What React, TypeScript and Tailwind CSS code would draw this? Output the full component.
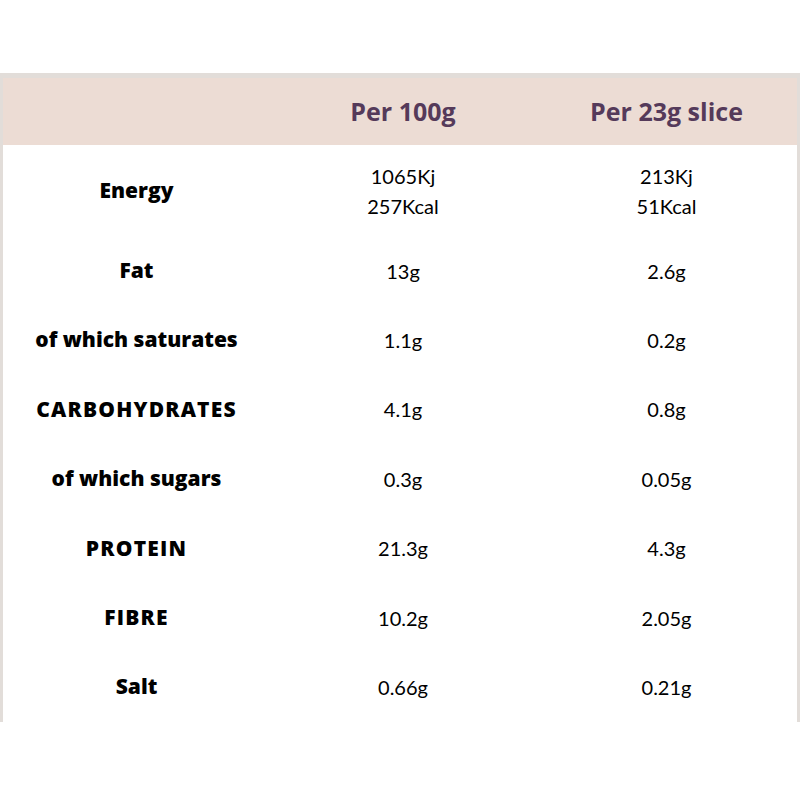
const rows: { label: string; caps?: boolean; per100: string[]; perSlice: string[] }[] = [
  { label: "Energy", per100: ["1065Kj", "257Kcal"], perSlice: ["213Kj", "51Kcal"] },
  { label: "Fat", per100: ["13g"], perSlice: ["2.6g"] },
  { label: "of which saturates", per100: ["1.1g"], perSlice: ["0.2g"] },
  { label: "CARBOHYDRATES", caps: true, per100: ["4.1g"], perSlice: ["0.8g"] },
  { label: "of which sugars", per100: ["0.3g"], perSlice: ["0.05g"] },
  { label: "PROTEIN", caps: true, per100: ["21.3g"], perSlice: ["4.3g"] },
  { label: "FIBRE", caps: true, per100: ["10.2g"], perSlice: ["2.05g"] },
  { label: "Salt", per100: ["0.66g"], perSlice: ["0.21g"] },
];

export default function App() {
  return (
    <div className="w-[800px] h-[800px] bg-white pt-[73px] font-['Lato',sans-serif]">
      <div className="border-x-[3px] border-t-[5px] border-[#e2ddd9]">
        {/* header */}
        <div className="grid grid-cols-[267px_266px_1fr] h-[67px] items-center bg-[#ecdcd4] text-[#553a5a] text-[25px] font-bold font-['Open_Sans',sans-serif]">
          <div />
          <div className="text-center">Per 100g</div>
          <div className="text-center">Per 23g slice</div>
        </div>

        {rows.map((row, i) => (
          <div
            key={row.label}
            className={`grid grid-cols-[267px_266px_1fr] items-center text-black ${i === 0 ? "h-[91px]" : "h-[69.4px]"}`}
          >
            <div
              className={`text-center text-[21px] font-extrabold font-['Open_Sans',sans-serif] ${row.caps ? "tracking-[1.2px]" : ""}`}
            >
              {row.label}
            </div>
            <div className="text-center text-[20px] leading-[30px]">
              {row.per100.map((v) => (
                <div key={v}>{v}</div>
              ))}
            </div>
            <div className="text-center text-[20px] leading-[30px]">
              {row.perSlice.map((v) => (
                <div key={v}>{v}</div>
              ))}
            </div>
          </div>
        ))}
      </div>
    </div>
  );
}
